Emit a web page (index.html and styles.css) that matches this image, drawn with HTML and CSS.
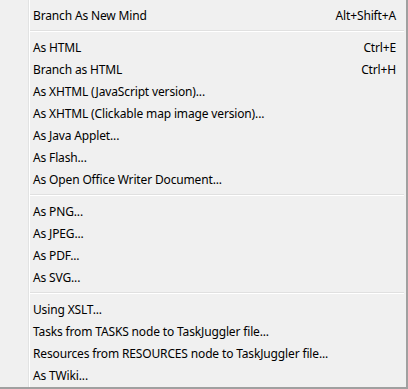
FILE: index.html
```html
<!DOCTYPE html>
<html lang="en">
<head>
    <meta charset="UTF-8">
    <title>Export Menu</title>
    <link rel="stylesheet" href="styles.css">
</head>
<body>
    <div class="menu">
        <div class="item"><span>Branch As New Mind</span><span class="key">Alt+Shift+A</span></div>
        <div class="sep"></div>

        <div class="item"><span>As HTML</span><span class="key">Ctrl+E</span></div>
        <div class="item"><span>Branch as HTML</span><span class="key">Ctrl+H</span></div>
        <div class="item"><span>As XHTML (JavaScript version)...</span></div>
        <div class="item"><span>As XHTML (Clickable map image version)...</span></div>
        <div class="item"><span>As Java Applet...</span></div>
        <div class="item"><span>As Flash...</span></div>
        <div class="item"><span>As Open Office Writer Document...</span></div>
        <div class="sep"></div>

        <div class="item"><span>As PNG...</span></div>
        <div class="item"><span>As JPEG...</span></div>
        <div class="item"><span>As PDF...</span></div>
        <div class="item"><span>As SVG...</span></div>
        <div class="sep"></div>

        <div class="item"><span>Using XSLT...</span></div>
        <div class="item"><span>Tasks from TASKS node to TaskJuggler file...</span></div>
        <div class="item"><span>Resources from RESOURCES node to TaskJuggler file...</span></div>
        <div class="item"><span>As TWiki...</span></div>
    </div>
</body>
</html>
```

FILE: styles.css
```css
body {
    margin: 0;
    padding: 0;
    background: #f0f0f0;
    font-family: 'Noto Sans', sans-serif;
    font-size: 12px;
    letter-spacing: -0.15px;
    color: #000;
}

.menu {
    width: 408px;
    height: 389px;
    box-sizing: border-box;
    padding-top: 4px;
    border-right: 2px solid #a0a0a0;
    border-bottom: 2px solid #a0a0a0;
    background: linear-gradient(to right, #f0f0f0 28px, #e2e3e3 28px, #e2e3e3 29px, #fff 29px, #fff 30px, #f0f0f0 30px);
}

.item {
    display: flex;
    justify-content: space-between;
    align-items: center;
    height: 22px;
    padding-left: 33px;
    padding-right: 10px;
    white-space: nowrap;
}

.sep {
    height: 10px;
    margin: 0 2px 0 30px;
    background: linear-gradient(to bottom, transparent 4px, #e0e0e0 4px, #e0e0e0 5px, #fff 5px, #fff 6px, transparent 6px);
}
```
